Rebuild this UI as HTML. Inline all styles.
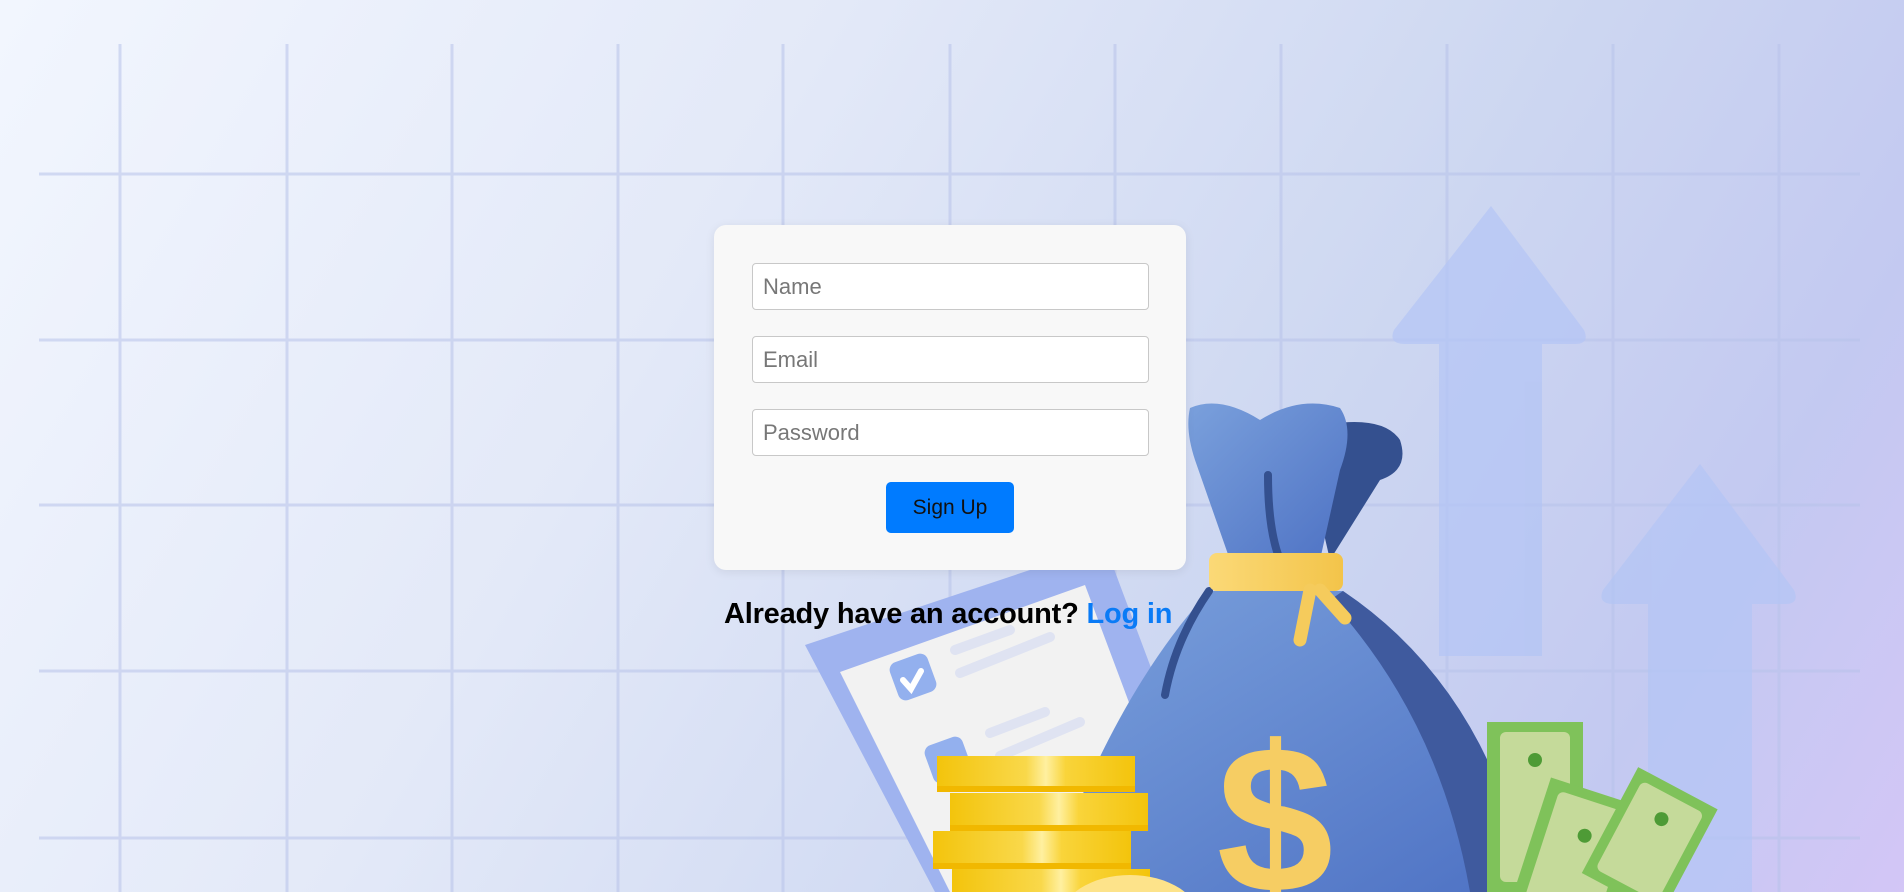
<!DOCTYPE html>
<html><head><meta charset="utf-8"><style>
html,body{margin:0;padding:0;width:1904px;height:892px;overflow:hidden;font-family:"Liberation Sans",sans-serif}
body{position:relative;background:linear-gradient(120deg,#f2f6fe 0%,#e3e9f8 35%,#cdd7f1 65%,#c3c9f1 85%,#d3c6f6 100%)}
.wrap{position:absolute;left:0;top:0;width:1904px;height:892px;overflow:hidden}
svg{position:absolute;left:0;top:0}
.card{position:absolute;left:714px;top:225px;width:472px;height:345px;background:#f8f8f8;border-radius:12px;box-shadow:0 2px 10px rgba(0,0,0,.08)}
.in{position:absolute;left:38px;border:1px solid #c8c8c8;border-radius:4px;background:#fff;font-size:22px;color:#777;line-height:45px;padding-left:10px;box-sizing:border-box;width:397px;height:47px}
.btn{position:absolute;left:172px;top:257px;width:128px;height:51px;background:#007bff;border-radius:5px;font-size:21px;color:#111;text-align:center;line-height:51px}
.q{position:absolute;left:724px;top:598px;font-size:29px;font-weight:bold;color:#000;font-family:"Liberation Sans",sans-serif;white-space:nowrap;letter-spacing:-0.2px}
.q span{color:#0a7bf6}
</style></head><body>
<div class="wrap">
<svg width="1904" height="892" viewBox="0 0 1904 892">
<defs>
<linearGradient id="bag" x1="0" y1="0" x2="1" y2="1"><stop offset="0" stop-color="#7aa0dc"/><stop offset="1" stop-color="#4e72c4"/></linearGradient>
<linearGradient id="coin" x1="0" y1="0" x2="1" y2="0"><stop offset="0" stop-color="#f3c40c"/><stop offset=".45" stop-color="#f9d84a"/><stop offset=".55" stop-color="#fff0a0"/><stop offset=".65" stop-color="#f9d43a"/><stop offset="1" stop-color="#f3c40c"/></linearGradient>
<linearGradient id="band" x1="0" y1="0" x2="1" y2="0"><stop offset="0" stop-color="#fbd977"/><stop offset="1" stop-color="#f3c44a"/></linearGradient>
</defs>
<g stroke="#b8c3ea" stroke-width="3" opacity=".55">
<path d="M120 44V892M287 44V892M452 44V892M618 44V892M783 44V892M950 44V892M1115 44V892M1281 44V892M1447 44V892M1613 44V892M1779 44V892"/>
<path d="M39 174H1860M39 340H1860M39 505H1860M39 671H1860M39 838H1860"/>
</g>
<g fill="#b3c5f5" opacity=".7">
<path d="M1491 206 L1394 330 Q1388 344 1405 344 L1439 344 L1439 656 L1542 656 L1542 344 L1575 344 Q1590 344 1584 330 Z"/>
<path d="M1700 464 L1603 590 Q1597 604 1614 604 L1648 604 L1648 892 L1752 892 L1752 604 L1785 604 Q1800 604 1794 590 Z"/>
</g>
<path d="M805 645 L1105 545 L1235 892 L935 892 Z" fill="#9fb3ef"/>
<path d="M840 672 L1085 585 L1200 892 L950 892 Z" fill="#f2f2f2" />
<g fill="#93b0ee"><rect x="893" y="657" width="40" height="40" rx="8" transform="rotate(-20 913 677)"/><rect x="928" y="740" width="40" height="40" rx="8" transform="rotate(-20 948 760)"/></g>
<path d="M903 680 l8 9 l10 -18" stroke="#fff" stroke-width="6" fill="none" stroke-linecap="round"/>
<g stroke="#dfe3f2" stroke-width="10" stroke-linecap="round"><path d="M955 650 L1010 630M960 673 L1050 637M990 733 L1045 712M1000 756 L1080 722"/></g>
<path d="M1300 430 Q1380 410 1400 440 Q1410 470 1380 480 L1330 560 Z" fill="#34508f"/>
<path d="M1190 408 Q1220 395 1260 420 Q1300 395 1340 408 Q1355 430 1340 470 L1320 560 L1230 560 L1195 460 Q1185 430 1190 408Z" fill="url(#bag)"/>
<path d="M1209 591 Q1110 700 1045 892 L1530 892 Q1490 690 1343 591 Z" fill="url(#bag)"/>
<path d="M1343 591 Q1490 690 1530 892 L1470 892 Q1440 720 1330 600 Z" fill="#3f5a9e"/>
<path d="M1209 591 Q1175 640 1165 695" stroke="#34508f" stroke-width="8" fill="none" stroke-linecap="round"/>
<path d="M1268 475 Q1268 530 1280 560" stroke="#34508f" stroke-width="8" fill="none" stroke-linecap="round"/>
<rect x="1209" y="553" width="134" height="38" rx="8" fill="url(#band)"/>
<path d="M1310 590 L1300 640 M1320 590 L1345 618" stroke="#f5cb5c" stroke-width="13" stroke-linecap="round"/>
<text x="1275" y="892" font-family="Liberation Sans,sans-serif" font-weight="bold" font-size="210" fill="#f6cd63" text-anchor="middle">$</text>
<g>
<rect x="937" y="756" width="198" height="36" fill="url(#coin)"/><rect x="937" y="786" width="198" height="6" fill="#f1b800"/>
<rect x="950" y="793" width="198" height="38" fill="url(#coin)"/><rect x="950" y="825" width="198" height="6" fill="#f1b800"/>
<rect x="933" y="831" width="198" height="38" fill="url(#coin)"/><rect x="933" y="863" width="198" height="6" fill="#f1b800"/>
<rect x="952" y="869" width="198" height="23" fill="url(#coin)"/>
<ellipse cx="1130" cy="920" rx="70" ry="45" fill="#fde38a"/>
</g>
<g>
<rect x="1487" y="722" width="96" height="170" fill="#7fc25a"/><rect x="1500" y="732" width="70" height="150" rx="6" fill="#c5da9a"/><circle cx="1535" cy="760" r="7" fill="#4e9b36"/>
<g transform="rotate(18 1580 850)"><rect x="1530" y="790" width="100" height="140" fill="#7fc25a"/><rect x="1542" y="800" width="76" height="120" rx="6" fill="#c5da9a"/><circle cx="1580" cy="835" r="7" fill="#4e9b36"/></g>
<g transform="rotate(28 1650 830)"><rect x="1610" y="780" width="90" height="120" fill="#7fc25a"/><rect x="1620" y="790" width="70" height="100" rx="6" fill="#c5da9a"/><circle cx="1655" cy="815" r="7" fill="#4e9b36"/></g>
</g>
</svg>
<div class="card">
<div class="in" style="top:38px">Name</div>
<div class="in" style="top:111px">Email</div>
<div class="in" style="top:184px">Password</div>
<div class="btn">Sign Up</div>
</div>
<div class="q">Already have an account? <span>Log in</span></div>
</div>
</body></html>
